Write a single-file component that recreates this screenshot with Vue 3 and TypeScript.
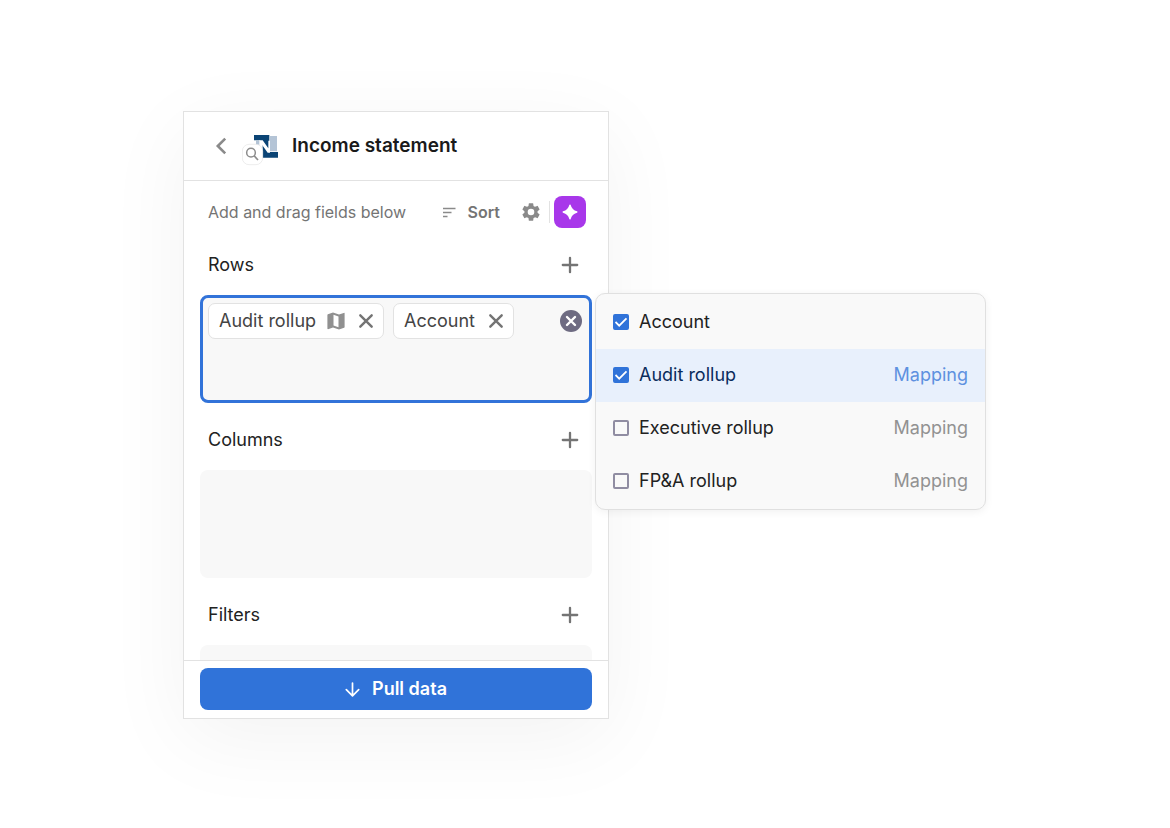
<script setup lang="ts">
import { reactive, computed } from 'vue'

interface Field {
  id: string
  name: string
  mapping: boolean
  checked: boolean
}

const fields = reactive<Field[]>([
  { id: 'account', name: 'Account', mapping: false, checked: true },
  { id: 'audit', name: 'Audit rollup', mapping: true, checked: true },
  { id: 'executive', name: 'Executive rollup', mapping: true, checked: false },
  { id: 'fpa', name: 'FP&A rollup', mapping: true, checked: false },
])

const sections: string[] = ['Rows', 'Columns', 'Filters']

const chips = computed<Field[]>(() =>
  fields.filter((f) => f.checked).sort((a, b) => Number(b.mapping) - Number(a.mapping)),
)

function clearAll(): void {
  fields.forEach((f) => {
    f.checked = false
  })
}
</script>

<template>
  <main class="stage">
    <div class="workspace">
      <section class="panel" aria-label="Income statement">
        <header class="panel-header">
          <button class="icon-button" type="button" aria-label="Back">
            <svg width="12" height="18" viewBox="0 0 12 18" fill="none" stroke="#8a8a8a" stroke-width="2.6">
              <path d="M10.2 1.6 2.8 9l7.4 7.4" />
            </svg>
          </button>
          <svg class="logo" width="38" height="40" viewBox="186 63 114 120" aria-hidden="true">
            <path fill="#b4c4d6" d="M270 93h21v46h-21zM228 107h12v40h-12z" />
            <path fill="#0b4475" d="M222 90h46v51h26v17h-46v-40l-8-12h-18z" />
            <path fill="#fff" d="M238 106h10l17 24v-23h5v36h-7l-17-24v30h-8z" />
            <rect x="187" y="118" width="61" height="61" rx="20" fill="#fff" stroke="#e4e4e4" stroke-width="2" />
            <circle cx="213" cy="143" r="13" fill="none" stroke="#8c8c8c" stroke-width="4.5" />
            <path d="m222 152 12 13" fill="none" stroke="#8c8c8c" stroke-width="5" />
          </svg>
          <h1>Income statement</h1>
        </header>

        <div class="panel-body">
          <div class="toolbar">
            <p>Add and drag fields below</p>
            <button class="sort" type="button">
              <svg width="13" height="11" viewBox="0 0 13 11" stroke="#8a8a8a" stroke-width="1.3" aria-hidden="true">
                <path d="M0 1.5h12.5M0 5.5h8.5M0 9.5h4.5" />
              </svg>
              Sort
            </button>
            <button class="icon-button" type="button" aria-label="Settings">
              <svg width="22" height="22" viewBox="0 0 24 24" fill="#8a8a8a">
                <path d="M19.14 12.94c.04-.3.06-.61.06-.94s-.02-.64-.07-.94l2.03-1.58a.49.49 0 0 0 .12-.61l-1.92-3.32a.49.49 0 0 0-.59-.22l-2.39.96a7 7 0 0 0-1.62-.94l-.36-2.54a.48.48 0 0 0-.48-.41h-3.84a.48.48 0 0 0-.47.41l-.36 2.54c-.59.24-1.13.57-1.62.94l-2.39-.96a.48.48 0 0 0-.59.22L2.74 8.87a.48.48 0 0 0 .12.61l2.03 1.58c-.05.3-.09.63-.09.94s.02.64.07.94l-2.03 1.58a.49.49 0 0 0-.12.61l1.92 3.32c.12.22.37.29.59.22l2.39-.96c.5.38 1.03.7 1.62.94l.36 2.54c.05.24.24.41.48.41h3.84c.24 0 .44-.17.47-.41l.36-2.54c.59-.24 1.13-.56 1.62-.94l2.39.96c.22.08.47 0 .59-.22l1.92-3.32a.48.48 0 0 0-.12-.61zM12 15.6A3.6 3.6 0 1 1 12 8.4a3.6 3.6 0 0 1 0 7.2z" />
              </svg>
            </button>
            <span class="divider"></span>
            <button class="spark" type="button" aria-label="Assistant">
              <svg width="16" height="16" viewBox="0 0 16 16" fill="#fff" stroke="#fff" stroke-width="1.4" stroke-linejoin="round">
                <path d="M8 1.2Q9.400 6.600 14.800 8 9.400 9.400 8 14.800 6.600 9.400 1.200 8 6.600 6.600 8 1.200z" />
              </svg>
            </button>
          </div>

          <section v-for="(title, i) in sections" :key="title" class="group">
            <div class="group-head">
              <h2>{{ title }}</h2>
              <button class="icon-button" type="button" :aria-label="`Add to ${title}`">
                <svg width="18" height="18" viewBox="0 0 18 18" stroke="#747474" stroke-width="2.3" stroke-linecap="round">
                  <path d="M9 1.8v14.4M1.8 9h14.4" />
                </svg>
              </button>
            </div>
            <div class="zone" :class="{ active: i === 0 }">
              <template v-if="i === 0">
                <ul class="chips">
                  <li v-for="chip in chips" :key="chip.id" class="chip">
                    <span>{{ chip.name }}</span>
                    <svg v-if="chip.mapping" width="18" height="18" viewBox="0 0 18 18" aria-hidden="true">
                      <path fill="#909090" d="M17.5.7 12 2.6 6 .6.9 2.3.4 2.8v14l.6.4L6 15.400l6 2 5.100-1.700.5-.5V1.200zM11.500 15.200 6.500 13.500V2.800l5 1.700z" fill-rule="evenodd" />
                    </svg>
                    <button class="icon-button remove" type="button" :aria-label="`Remove ${chip.name}`" @click="chip.checked = false">
                      <svg width="16" height="16" viewBox="0 0 16 16" stroke="#747474" stroke-width="2.4" stroke-linecap="round">
                        <path d="m2.3 2.3 11.4 11.4M13.7 2.3 2.3 13.7" />
                      </svg>
                    </button>
                  </li>
                </ul>
                <button class="icon-button clear" type="button" aria-label="Clear rows" @click="clearAll">
                  <svg width="22" height="22" viewBox="0 0 22 22" fill="none">
                    <circle cx="11" cy="11" r="11" fill="#6e6b82" />
                    <path d="m7 7 8 8M15 7l-8 8" stroke="#fff" stroke-width="2.4" stroke-linecap="round" />
                  </svg>
                </button>
              </template>
            </div>
          </section>
        </div>

        <footer class="panel-footer">
          <button class="pull" type="button">
            <svg width="15" height="15" viewBox="0 0 15 15" fill="none" stroke="#fff" stroke-width="1.7" stroke-linecap="round" stroke-linejoin="round" aria-hidden="true">
              <path d="M7.5 1v12.600M1.300 7.700l6.200 6.100 6.200-6.100" />
            </svg>
            Pull data
          </button>
        </footer>
      </section>

      <div class="picker" role="group" aria-label="Row fields">
        <label v-for="(field, i) in fields" :key="field.id" class="option" :class="{ highlighted: i === 1 }">
          <input v-model="field.checked" type="checkbox" />
          <span class="option-name">{{ field.name }}</span>
          <span v-if="field.mapping" class="option-kind">Mapping</span>
        </label>
      </div>
    </div>
  </main>
</template>

<style>
body {
  margin: 0;
  background: #fff;
}
</style>

<style scoped>
* {
  box-sizing: border-box;
}

.stage {
  min-height: 100vh;
  padding: 111px 184px 109px 183px;
  overflow: hidden;
  font-family: Inter, 'Liberation Sans', sans-serif;
  font-size: 18px;
  line-height: 24px;
  color: #222;
}

.workspace {
  position: relative;
}

.panel {
  display: flex;
  flex-direction: column;
  max-width: 426px;
  height: calc(100vh - 220px);
  background: #fff;
  border: 1px solid #e2e2e2;
  box-shadow: 0 20px 80px rgba(0, 0, 0, 0.05);
}

button {
  font: inherit;
  color: inherit;
  background: none;
  border: 0;
  padding: 0;
  cursor: pointer;
}

.icon-button {
  display: flex;
  align-items: center;
  justify-content: center;
}

.icon-button svg {
  display: block;
}

.panel-header {
  display: flex;
  align-items: center;
  flex: none;
  height: 69px;
  padding: 0 24px 0 31px;
  border-bottom: 1px solid #e2e2e2;
}

.logo {
  margin: 0 12px 0 15px;
}

h1,
h2,
p {
  margin: 0;
}

h1 {
  font-size: 19px;
  line-height: 26px;
  font-weight: 600;
  color: #1a1a1a;
}

.panel-body {
  flex: 1;
  min-height: 0;
  overflow: hidden;
  padding: 15px 16px 0;
}

.toolbar {
  display: flex;
  align-items: center;
  height: 32px;
  padding: 0 6px 0 8px;
  font-size: 16px;
  color: #747474;
}

.toolbar p {
  flex: 1;
}

.sort {
  display: flex;
  align-items: center;
  gap: 12px;
  margin-right: 20px;
  font-weight: 600;
}

.divider {
  width: 1px;
  height: 22px;
  margin: 0 4px 0 7px;
  background: #e2e2e2;
}

.spark {
  display: flex;
  align-items: center;
  justify-content: center;
  width: 32px;
  height: 32px;
  border-radius: 8px;
  background: #a837ea;
}

.group {
  padding-top: 7px;
}

.group-head {
  display: flex;
  align-items: center;
  justify-content: space-between;
  height: 60px;
  padding: 0 13px 0 8px;
}

h2 {
  font-size: 18px;
  font-weight: 400;
}

.zone {
  display: flex;
  align-items: flex-start;
  justify-content: space-between;
  min-height: 108px;
  padding: 8px;
  border-radius: 8px;
  background: #f8f8f8;
}

.zone.active {
  padding: 5px 7px 5px 5px;
  border: 3px solid #3273d9;
}

.chips {
  display: flex;
  flex-wrap: wrap;
  gap: 9px;
  margin: 0;
  padding: 0;
  list-style: none;
}

.chip {
  display: flex;
  align-items: center;
  gap: 11px;
  height: 36px;
  padding: 0 7px 0 10px;
  border: 1px solid #e2e2e2;
  border-radius: 7px;
  background: #fff;
  color: #444;
}

.remove {
  width: 20px;
  height: 20px;
}

.clear {
  height: 36px;
}

.panel-footer {
  flex: none;
  padding: 7px 16px 8px;
  border-top: 1px solid #e2e2e2;
}

.pull {
  display: flex;
  align-items: center;
  justify-content: center;
  gap: 12px;
  width: 100%;
  height: 42px;
  border-radius: 8px;
  background: #3073d9;
  font-weight: 600;
  color: #fff;
}

.picker {
  position: absolute;
  top: 182px;
  left: 412px;
  right: 0;
  padding: 2px 0 1px;
  border: 1px solid #e0e0e0;
  border-radius: 10px;
  background: #f9f9f9;
  box-shadow: 0 2px 8px rgba(0, 0, 0, 0.06);
}

.option {
  display: flex;
  align-items: center;
  height: 53px;
  padding: 0 17px 2px;
}

.option input {
  appearance: none;
  flex: none;
  width: 16px;
  height: 16px;
  margin: 0 10px 0 0;
  border: 2px solid #908da2;
  border-radius: 2px;
}

.option input:checked {
  border-color: #3073d9;
  background: #3073d9 url("data:image/svg+xml,%3Csvg xmlns='http://www.w3.org/2000/svg' viewBox='0 0 16 16' fill='none' stroke='white' stroke-width='1.8'%3E%3Cpath d='m2.5 8 3.700 3.700L13.500 4.300'/%3E%3C/svg%3E") center / 16px 16px no-repeat;
}

.option-name {
  flex: 1;
}

.option-kind {
  color: #929292;
}

.option.highlighted {
  background: #e8f0fc;
  color: #0a2c5c;
}

.highlighted .option-kind {
  color: #5e91e0;
}
</style>
